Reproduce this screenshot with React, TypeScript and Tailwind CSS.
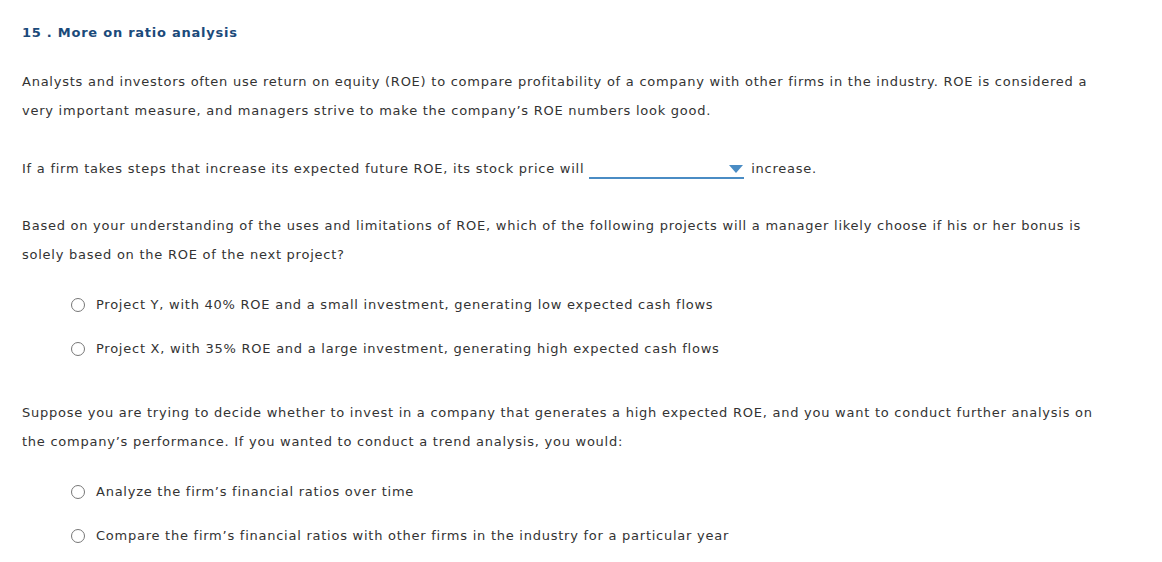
export default function App() {
  const font = { fontFamily: '"DejaVu Sans", Verdana, sans-serif' };
  return (
    <div className="w-[1162px] h-[562px] bg-white text-[#333333] text-[13px] tracking-[0.75px] pl-[22px] pr-[50px] pt-[24px]" style={font}>
      <h2 className="text-[13px] font-bold text-[#1b4a7a] leading-[18px]">15 . More on ratio analysis</h2>

      <p className="mt-[25px] leading-[29px]">
        Analysts and investors often use return on equity (ROE) to compare profitability of a company with other firms in the industry. ROE is considered a very important measure, and managers strive to make the company’s ROE numbers look good.
      </p>

      <div className="mt-[29px] flex items-center h-[29px]">
        <span>If a firm takes steps that increase its expected future ROE, its stock price will</span>
        <span className="ml-[5px] relative w-[155px] h-[20px] border-b-[2px] border-[#4a8cc4]">
          <span className="absolute right-[1px] top-[6px] w-0 h-0 border-l-[7px] border-r-[7px] border-t-[8px] border-l-transparent border-r-transparent border-t-[#4a8cc4]" />
        </span>
        <span className="ml-[7px]">increase.</span>
      </div>

      <p className="mt-[28px] leading-[29px]">
        Based on your understanding of the uses and limitations of ROE, which of the following projects will a manager likely choose if his or her bonus is solely based on the ROE of the next project?
      </p>

      <div className="mt-[21px] ml-[49px] flex flex-col gap-[15px]">
        <Radio label="Project Y, with 40% ROE and a small investment, generating low expected cash flows" />
        <Radio label="Project X, with 35% ROE and a large investment, generating high expected cash flows" />
      </div>

      <p className="mt-[35px] leading-[29px]">
        Suppose you are trying to decide whether to invest in a company that generates a high expected ROE, and you want to conduct further analysis on the company’s performance. If you wanted to conduct a trend analysis, you would:
      </p>

      <div className="mt-[21px] ml-[49px] flex flex-col gap-[15px]">
        <Radio label="Analyze the firm’s financial ratios over time" />
        <Radio label="Compare the firm’s financial ratios with other firms in the industry for a particular year" />
      </div>
    </div>
  );
}

function Radio({ label }: { label: string }) {
  return (
    <label className="flex items-center h-[29px]">
      <span className="w-[14px] h-[14px] rounded-full border border-[#777777] bg-white" />
      <span className="ml-[11px]">{label}</span>
    </label>
  );
}
